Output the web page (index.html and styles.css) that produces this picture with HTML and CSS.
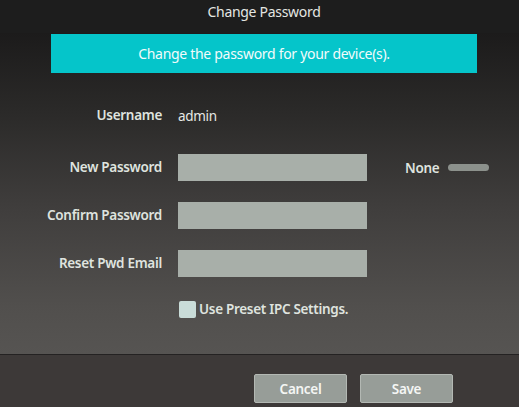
FILE: index.html
```html
<!DOCTYPE html>
<html lang="en">
<head>
  <meta charset="UTF-8">
  <title>Change Password</title>
  <link rel="stylesheet" href="styles.css">
</head>
<body>
  <div class="titlebar">Change Password</div>
  <div class="content">
    <div class="banner">Change the password for your device(s).</div>
    <div class="form">
      <div class="label top">Username</div>
      <div class="value top">admin</div>
      <div class="top"></div>

      <div class="label">New Password</div>
      <div class="field"></div>
      <div class="strength">
        <span>None</span>
        <span class="meter"></span>
      </div>

      <div class="label">Confirm Password</div>
      <div class="field"></div>
      <div></div>

      <div class="label">Reset Pwd Email</div>
      <div class="field"></div>
      <div></div>
    </div>
    <div class="preset">
      <span class="box"></span>
      <span>Use Preset IPC Settings.</span>
    </div>
  </div>
  <div class="footer">
    <button class="btn">Cancel</button>
    <button class="btn">Save</button>
  </div>
</body>
</html>
```

FILE: styles.css
```css
body {
  margin: 0;
  width: 519px;
  height: 407px;
  overflow: hidden;
  background: #3d3938;
  font-family: 'Noto Sans', 'Open Sans', sans-serif;
  color: #dfe3df;
  font-size: 13.5px;
  letter-spacing: -0.3px;
}
.titlebar {
  height: 33px;
  box-sizing: border-box;
  padding: 2px 0 0 9px;
  background: #1d1d1d;
  text-align: center;
  font-size: 14px;
  color: #e4e6e2;
}
.content {
  height: 322px;
  box-sizing: border-box;
  padding-top: 1px;
  background: linear-gradient(180deg, #1c1b1b 0%, #2b2a29 25%, #403e3d 55%, #514f4d 85%, #565452 100%);
  border-bottom: 1px solid #242222;
}
.banner {
  margin: 0 42px 0 51px;
  height: 39px;
  line-height: 39px;
  background: #05c5ca;
  color: #f2fbfb;
  text-align: center;
  font-size: 14px;
}
.form {
  display: grid;
  grid-template-columns: 162px 189px auto;
  column-gap: 16px;
  row-gap: 21px;
  align-items: center;
  margin-top: 29px;
}
.top { margin-bottom: 4px; }
.label {
  text-align: right;
  font-weight: 600;
  height: 27px;
  line-height: 27px;
}
.value {
  color: #e6e8e4;
}
.field {
  height: 27px;
  background: #a8afa9;
}
.strength {
  display: flex;
  align-items: center;
  gap: 9px;
  padding-left: 22px;
  font-weight: 600;
}
.meter {
  width: 41px;
  height: 7px;
  border-radius: 4px;
  background: #8c918c;
}
.preset {
  display: flex;
  align-items: center;
  gap: 3px;
  margin: 23px 0 0 179px;
  font-weight: 600;
}
.box {
  width: 17px;
  height: 17px;
  border-radius: 2px;
  background: #c9dcd8;
}
.footer {
  display: flex;
  justify-content: flex-end;
  gap: 13px;
  padding: 19px 66px 0 0;
}
.btn {
  width: 93px;
  height: 29px;
  border: 1px solid #b3b8b3;
  border-radius: 2px;
  background: #979d98;
  color: #f4f6f4;
  font-family: inherit;
  font-size: 13.5px;
  font-weight: 600;
  letter-spacing: -0.3px;
}
```
